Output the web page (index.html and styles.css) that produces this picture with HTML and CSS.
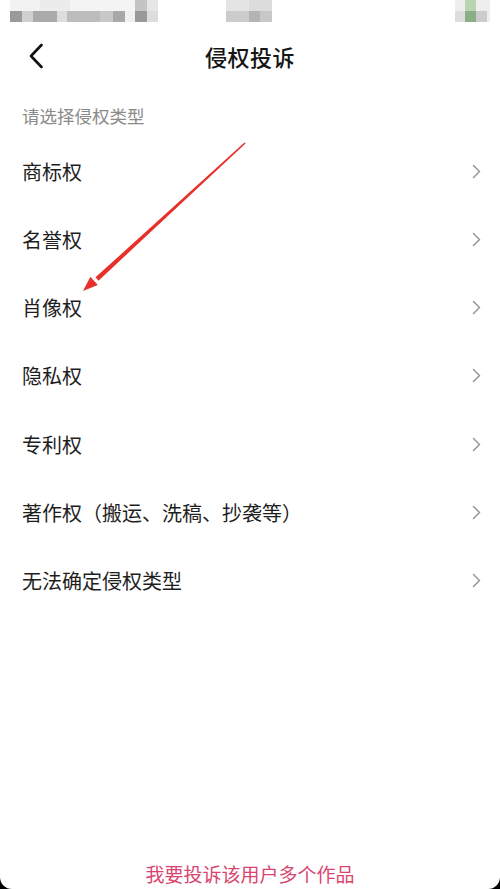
FILE: index.html
```html
<!DOCTYPE html>
<html lang="zh-CN">
<head>
<meta charset="utf-8">
<title>侵权投诉</title>
<link rel="stylesheet" href="styles.css">
</head>
<body>
<div class="screen">
  <div class="status">
    <div class="sgroup g1"><div class="r1"></div><div class="r2"></div></div>
    <div class="sgroup g2"><div class="r1"></div><div class="r2"></div></div>
    <div class="sgroup g3"><div class="r1"></div><div class="r2"></div></div>
  </div>
  <header class="nav">
    <svg class="back" width="16" height="26" viewBox="0 0 16 26"><path d="M13.5 2 L3 13 L13.5 24" fill="none" stroke="#111" stroke-width="2.6" stroke-linecap="round" stroke-linejoin="round"/></svg>
    <h1 class="title">侵权投诉</h1>
  </header>
  <div class="label">请选择侵权类型</div>
  <ul class="list">
    <li class="item"><span>商标权</span><svg class="chev" width="9" height="15" viewBox="0 0 9 15"><path d="M1.5 1.5 L7.5 7.5 L1.5 13.5" fill="none" stroke="#9a9a9a" stroke-width="1.6" stroke-linecap="round" stroke-linejoin="round"/></svg></li>
    <li class="item"><span>名誉权</span><svg class="chev" width="9" height="15" viewBox="0 0 9 15"><path d="M1.5 1.5 L7.5 7.5 L1.5 13.5" fill="none" stroke="#9a9a9a" stroke-width="1.6" stroke-linecap="round" stroke-linejoin="round"/></svg></li>
    <li class="item"><span>肖像权</span><svg class="chev" width="9" height="15" viewBox="0 0 9 15"><path d="M1.5 1.5 L7.5 7.5 L1.5 13.5" fill="none" stroke="#9a9a9a" stroke-width="1.6" stroke-linecap="round" stroke-linejoin="round"/></svg></li>
    <li class="item"><span>隐私权</span><svg class="chev" width="9" height="15" viewBox="0 0 9 15"><path d="M1.5 1.5 L7.5 7.5 L1.5 13.5" fill="none" stroke="#9a9a9a" stroke-width="1.6" stroke-linecap="round" stroke-linejoin="round"/></svg></li>
    <li class="item"><span>专利权</span><svg class="chev" width="9" height="15" viewBox="0 0 9 15"><path d="M1.5 1.5 L7.5 7.5 L1.5 13.5" fill="none" stroke="#9a9a9a" stroke-width="1.6" stroke-linecap="round" stroke-linejoin="round"/></svg></li>
    <li class="item"><span>著作权（搬运、洗稿、抄袭等）</span><svg class="chev" width="9" height="15" viewBox="0 0 9 15"><path d="M1.5 1.5 L7.5 7.5 L1.5 13.5" fill="none" stroke="#9a9a9a" stroke-width="1.6" stroke-linecap="round" stroke-linejoin="round"/></svg></li>
    <li class="item"><span>无法确定侵权类型</span><svg class="chev" width="9" height="15" viewBox="0 0 9 15"><path d="M1.5 1.5 L7.5 7.5 L1.5 13.5" fill="none" stroke="#9a9a9a" stroke-width="1.6" stroke-linecap="round" stroke-linejoin="round"/></svg></li>
  </ul>
  <div class="footer"><span class="multi">我要投诉该用户多个作品</span></div>
  <svg class="annot" width="500" height="889" viewBox="0 0 500 889">
    <polygon points="245.54,143.59 244.46,142.41 95.51,277.37 98.49,280.63" fill="#e8302a"/>
    <polygon points="83,291 90.37,276.8 97.81,284.92" fill="#e8302a"/>
  </svg>
</div>
</body>
</html>
```

FILE: styles.css
```css
* { box-sizing: border-box; }
html, body {
  margin: 0;
  padding: 0;
  background: #000;
}
body {
  font-family: "Noto Sans CJK SC", "Noto Sans", sans-serif;
  width: 500px;
  height: 889px;
  overflow: hidden;
}
.screen {
  position: relative;
  width: 500px;
  height: 889px;
  background: #fff;
  border-bottom-left-radius: 12px;
  border-bottom-right-radius: 12px;
  display: flex;
  flex-direction: column;
  overflow: hidden;
}
.status {
  height: 24px;
  display: flex;
  flex-shrink: 0;
}
.sgroup { display: flex; flex-direction: column; }
.sgroup .r1, .sgroup .r2 { height: 11px; }
.g1 { margin-left: 10px; width: 148px; }
.g1 .r1 {
  background: linear-gradient(to right, #f2f2f2 0 30px, #ececec 30px 60px, #f4f4f4 60px 125px, #c4c4c4 125px 137px, #e6e6e6 137px 148px);
}
.g1 .r2 {
  background: linear-gradient(to right, #9a9a9a 0 12px, #d0d0d0 12px 23px, #aaaaaa 23px 47px, #dddddd 47px 57px, #bcbcbc 57px 90px, #c8c8c8 90px 103px, #a8a8a8 103px 115px, #f0f0f0 115px 125px, #999999 125px 137px, #dddddd 137px 148px);
}
.g2 { margin-left: 68px; width: 46px; }
.g2 .r1 { background: linear-gradient(to right, #e4e4e4 0 23px, #dcdcdc 23px 46px); }
.g2 .r2 { background: linear-gradient(to right, #cccccc 0 23px, #b4b4b4 23px 34px, #c8c8c8 34px 46px); }
.g3 { margin-left: 183px; width: 35px; }
.g3 .r1 { background: linear-gradient(to right, #eeeeee 0 10px, #b8d4b0 10px 21px, #eeeeee 21px 35px); }
.g3 .r2 { background: linear-gradient(to right, #dddddd 0 10px, #8aae85 10px 21px, #cccccc 21px 32px, #eeeeee 32px 35px); }

.nav {
  height: 64px;
  position: relative;
  display: flex;
  align-items: center;
  justify-content: center;
  flex-shrink: 0;
}
.back {
  position: absolute;
  left: 28px;
  top: 19px;
}
.title {
  margin: 0;
  font-size: 22px;
  font-weight: 500;
  color: #151515;
  line-height: 30px;
  letter-spacing: 0.5px;
}
.label {
  padding: 17px 0 11px 22px;
  font-size: 17.5px;
  line-height: 21px;
  color: #8a8a8a;
  flex-shrink: 0;
}
.list {
  list-style: none;
  margin: 0;
  padding: 0;
}
.item {
  height: 68px;
  display: flex;
  align-items: center;
  justify-content: space-between;
  padding: 0 19px 0 22px;
  font-size: 20px;
  color: #1e1e1e;
}
.item:nth-child(3), .item:nth-child(4) { height: 68.5px; }
.chev { display: block; }
.footer {
  margin-top: auto;
  text-align: center;
  padding-bottom: 2px;
}
.multi {
  font-size: 19px;
  line-height: 24px;
  color: #d8456f;
}
.annot {
  position: absolute;
  left: 0;
  top: 0;
  pointer-events: none;
}
```
